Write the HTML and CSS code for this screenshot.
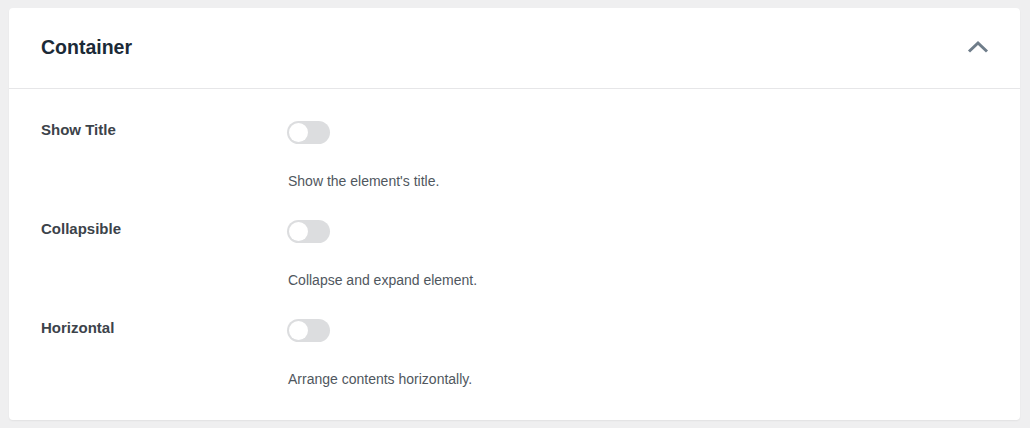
FILE: index.html
```html
<!DOCTYPE html>
<html lang="en">
<head>
<meta charset="utf-8">
<title>Container</title>
<link rel="stylesheet" href="styles.css">
</head>
<body>
<section class="card">
  <header class="card-head">
    <h2 class="card-title">Container</h2>
    <svg class="chevron" width="22" height="14" viewBox="0 0 22 14" aria-hidden="true"><path d="M2 11.5 L11 3 L20 11.5" fill="none" stroke="#6f7d8a" stroke-width="3"/></svg>
  </header>
  <div class="card-body">
    <div class="row">
      <div class="label">Show Title</div>
      <div class="control">
        <span class="toggle"><span class="knob"></span></span>
        <p class="desc">Show the element's title.</p>
      </div>
    </div>
    <div class="row">
      <div class="label">Collapsible</div>
      <div class="control">
        <span class="toggle"><span class="knob"></span></span>
        <p class="desc">Collapse and expand element.</p>
      </div>
    </div>
    <div class="row">
      <div class="label">Horizontal</div>
      <div class="control">
        <span class="toggle"><span class="knob"></span></span>
        <p class="desc">Arrange contents horizontally.</p>
      </div>
    </div>
  </div>
</section>
</body>
</html>
```
FILE: styles.css
```css
html, body {
  margin: 0;
  padding: 0;
}
body {
  background: #efeff0;
  font-family: "Liberation Sans", Arial, sans-serif;
  padding: 8px 10px 8px 9px;
}
.card {
  background: #fff;
  border-radius: 4px;
  box-shadow: 0 1px 2px rgba(0, 0, 0, 0.06);
  width: 1011px;
  height: 412px;
  box-sizing: border-box;
}
.card-head {
  height: 81px;
  box-sizing: border-box;
  display: flex;
  align-items: center;
  justify-content: space-between;
  padding: 0 31px 2px 32px;
  border-bottom: 1px solid #e6e6e8;
}
.card-title {
  margin: 0;
  font-size: 19.5px;
  font-weight: bold;
  color: #1b2a37;
}
.chevron {
  display: block;
}
.card-body {
  padding: 32px 32px 0 32px;
  display: flex;
  flex-direction: column;
  gap: 29px;
}
.row {
  display: grid;
  grid-template-columns: 247px 1fr;
}
.label {
  font-size: 15px;
  font-weight: bold;
  line-height: 17px;
  color: #3c434a;
}
.control {
  display: flex;
  flex-direction: column;
  align-items: flex-start;
  gap: 27px;
}
.toggle {
  display: block;
  width: 43px;
  height: 23px;
  margin-left: -1px;
  border-radius: 12px;
  background: #dcdddf;
  box-sizing: border-box;
  padding: 2px;
}
.knob {
  display: block;
  width: 19px;
  height: 19px;
  border-radius: 50%;
  background: #fff;
}
.desc {
  margin: 0;
  font-size: 14px;
  line-height: 20px;
  color: #50575e;
}
```
